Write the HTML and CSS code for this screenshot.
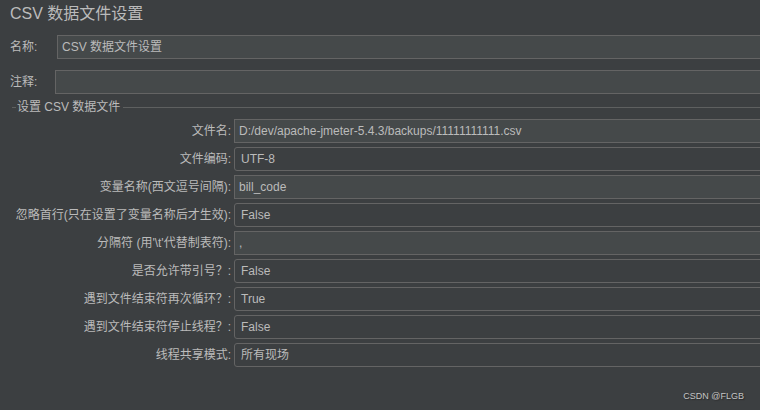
FILE: index.html
```html
<!DOCTYPE html>
<html lang="zh">
<head>
<meta charset="utf-8">
<title>CSV 数据文件设置</title>
<link rel="stylesheet" href="styles.css">
</head>
<body>
<div class="page">
  <h1 class="title">CSV 数据文件设置</h1>
  <div class="top-row top-row--name">
    <span class="top-label">名称:</span>
    <div class="field text">CSV 数据文件设置</div>
  </div>
  <div class="top-row top-row--comment">
    <span class="top-label">注释:</span>
    <div class="field text"></div>
  </div>
  <div class="legend">
    <span class="legend-lead"></span>
    <span class="legend-text">设置 CSV 数据文件</span>
    <span class="legend-line"></span>
  </div>
  <div class="form">
    <label class="lbl">文件名:</label>
    <div class="field text">D:/dev/apache-jmeter-5.4.3/backups/11111111111.csv</div>
    <label class="lbl">文件编码:</label>
    <div class="field combo">UTF-8</div>
    <label class="lbl">变量名称(西文逗号间隔):</label>
    <div class="field text">bill_code</div>
    <label class="lbl">忽略首行(只在设置了变量名称后才生效):</label>
    <div class="field combo">False</div>
    <label class="lbl">分隔符 (用'\t'代替制表符):</label>
    <div class="field text">,</div>
    <label class="lbl">是否允许带引号？:</label>
    <div class="field combo">False</div>
    <label class="lbl">遇到文件结束符再次循环？:</label>
    <div class="field combo">True</div>
    <label class="lbl">遇到文件结束符停止线程？:</label>
    <div class="field combo">False</div>
    <label class="lbl">线程共享模式:</label>
    <div class="field combo">所有现场</div>
  </div>
  <div class="watermark">CSDN @FLGB</div>
</div>
</body>
</html>
```

FILE: styles.css
```css
html, body {
  margin: 0;
  padding: 0;
  background: #3c3f41;
  overflow: hidden;
}
.page {
  position: relative;
  width: 760px;
  height: 410px;
  overflow: hidden;
  font-family: "Liberation Sans", "Noto Sans CJK SC", sans-serif;
  font-size: 12px;
  color: #bbbbbb;
}
.title {
  margin: 0;
  padding: 4px 10px;
  font-size: 16px;
  font-weight: normal;
  line-height: 20px;
  height: 20px;
  color: #bbbbbb;
}
.top-row {
  display: flex;
  align-items: center;
  height: 24px;
  padding-left: 10px;
}
.top-row--name { margin-top: 7px; }
.top-row--comment { margin-top: 11px; }
.top-label {
  flex: none;
  box-sizing: border-box;
  height: 24px;
  line-height: 23px;
  padding-top: 1px;
}
.top-row--name .top-label { width: 47px; }
.top-row--comment .top-label { width: 45px; }
.top-row .field { flex: 1; margin-right: -20px; }
.field {
  box-sizing: border-box;
  height: 24px;
  line-height: 21px;
  padding-top: 1px;
  border: 1px solid #646464;
  white-space: nowrap;
  overflow: hidden;
  color: #bbbbbb;
}
.field.text {
  background: #45494a;
  padding-left: 4px;
}
.field.combo {
  background: #3c3f41;
  border-radius: 3px;
  padding-left: 6px;
}
.legend {
  display: flex;
  align-items: center;
  margin-top: 6px;
  height: 14px;
  padding-left: 12px;
}
.legend-lead {
  width: 4px;
  border-top: 1px solid #5e6060;
}
.legend-text {
  padding: 0 3px 0 1px;
  line-height: 14px;
}
.legend-line {
  flex: 1;
  border-top: 1px solid #5e6060;
}
.form {
  display: grid;
  grid-template-columns: 231px 560px;
  grid-auto-rows: 24px;
  column-gap: 3px;
  row-gap: 4px;
  margin-top: 5px;
}
.lbl {
  box-sizing: border-box;
  text-align: right;
  height: 24px;
  line-height: 23px;
  padding-top: 1px;
  white-space: nowrap;
}
.watermark {
  position: absolute;
  right: 16px;
  bottom: 9px;
  font-size: 9px;
  color: #c4c4c4;
  text-shadow: 1px 1px 1px #2a2a2a;
}
```
